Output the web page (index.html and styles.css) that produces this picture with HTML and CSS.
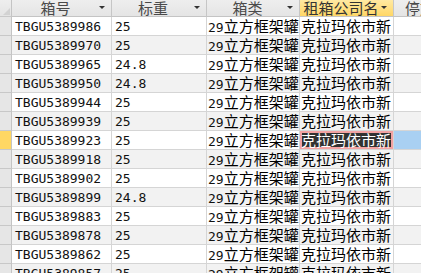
FILE: index.html
```html
<!DOCTYPE html>
<html>
<head>
<meta charset="utf-8">
<link rel="stylesheet" href="styles.css">
</head>
<body>
<div class="grid">
  <div class="row head">
    <div class="sel corner"><span class="tri"></span></div>
    <div class="hc c1"><span class="ht">箱号</span><span class="arr"></span></div>
    <div class="hc c2"><span class="ht">标重</span><span class="arr"></span></div>
    <div class="hc c3"><span class="ht">箱类</span><span class="arr"></span></div>
    <div class="hc c4 active"><span class="ht">租箱公司名</span><span class="arr"></span></div>
    <div class="hc c5 left"><span class="ht">停放位置</span></div>
  </div>
  <div class="row"><div class="sel"></div><div class="dc c1">TBGU5389986</div><div class="dc c2">25</div><div class="dc c3">29<span class="cjk">立方框架罐</span></div><div class="dc c4"><span class="cjk">克拉玛依市新</span></div><div class="dc c5"></div></div>
  <div class="row alt"><div class="sel"></div><div class="dc c1">TBGU5389970</div><div class="dc c2">25</div><div class="dc c3">29<span class="cjk">立方框架罐</span></div><div class="dc c4"><span class="cjk">克拉玛依市新</span></div><div class="dc c5"></div></div>
  <div class="row"><div class="sel"></div><div class="dc c1">TBGU5389965</div><div class="dc c2">24.8</div><div class="dc c3">29<span class="cjk">立方框架罐</span></div><div class="dc c4"><span class="cjk">克拉玛依市新</span></div><div class="dc c5"></div></div>
  <div class="row alt"><div class="sel"></div><div class="dc c1">TBGU5389950</div><div class="dc c2">24.8</div><div class="dc c3">29<span class="cjk">立方框架罐</span></div><div class="dc c4"><span class="cjk">克拉玛依市新</span></div><div class="dc c5"></div></div>
  <div class="row"><div class="sel"></div><div class="dc c1">TBGU5389944</div><div class="dc c2">25</div><div class="dc c3">29<span class="cjk">立方框架罐</span></div><div class="dc c4"><span class="cjk">克拉玛依市新</span></div><div class="dc c5"></div></div>
  <div class="row alt"><div class="sel"></div><div class="dc c1">TBGU5389939</div><div class="dc c2">25</div><div class="dc c3">29<span class="cjk">立方框架罐</span></div><div class="dc c4"><span class="cjk">克拉玛依市新</span></div><div class="dc c5"></div></div>
  <div class="row current"><div class="sel"></div><div class="dc c1">TBGU5389923</div><div class="dc c2">25</div><div class="dc c3">29<span class="cjk">立方框架罐</span></div><div class="dc c4 focus"><span class="cjk">克拉玛依市新</span></div><div class="dc c5"></div></div>
  <div class="row alt"><div class="sel"></div><div class="dc c1">TBGU5389918</div><div class="dc c2">25</div><div class="dc c3">29<span class="cjk">立方框架罐</span></div><div class="dc c4"><span class="cjk">克拉玛依市新</span></div><div class="dc c5"></div></div>
  <div class="row"><div class="sel"></div><div class="dc c1">TBGU5389902</div><div class="dc c2">25</div><div class="dc c3">29<span class="cjk">立方框架罐</span></div><div class="dc c4"><span class="cjk">克拉玛依市新</span></div><div class="dc c5"></div></div>
  <div class="row alt"><div class="sel"></div><div class="dc c1">TBGU5389899</div><div class="dc c2">24.8</div><div class="dc c3">29<span class="cjk">立方框架罐</span></div><div class="dc c4"><span class="cjk">克拉玛依市新</span></div><div class="dc c5"></div></div>
  <div class="row"><div class="sel"></div><div class="dc c1">TBGU5389883</div><div class="dc c2">25</div><div class="dc c3">29<span class="cjk">立方框架罐</span></div><div class="dc c4"><span class="cjk">克拉玛依市新</span></div><div class="dc c5"></div></div>
  <div class="row alt"><div class="sel"></div><div class="dc c1">TBGU5389878</div><div class="dc c2">25</div><div class="dc c3">29<span class="cjk">立方框架罐</span></div><div class="dc c4"><span class="cjk">克拉玛依市新</span></div><div class="dc c5"></div></div>
  <div class="row"><div class="sel"></div><div class="dc c1">TBGU5389862</div><div class="dc c2">25</div><div class="dc c3">29<span class="cjk">立方框架罐</span></div><div class="dc c4"><span class="cjk">克拉玛依市新</span></div><div class="dc c5"></div></div>
  <div class="row alt"><div class="sel"></div><div class="dc c1">TBGU5389857</div><div class="dc c2">25</div><div class="dc c3">29<span class="cjk">立方框架罐</span></div><div class="dc c4"><span class="cjk">克拉玛依市新</span></div><div class="dc c5"></div></div>
</div>
</body>
</html>
```
FILE: styles.css
```css
html, body {
  margin: 0;
  padding: 0;
  background: #ffffff;
  overflow: hidden;
}
.grid {
  width: 421px;
  height: 273px;
  overflow: hidden;
}
.row {
  display: flex;
  height: 19px;
  background: #ffffff;
}
.row.alt {
  background: #f2f2f2;
}
.row > div {
  box-sizing: border-box;
  flex: none;
  border-right: 1px solid #d5d5d5;
  border-bottom: 1px solid #d5d5d5;
  overflow: hidden;
  white-space: nowrap;
}
.sel {
  width: 12px;
  background: #e6e6e6;
  border-right-color: #c4c4c4 !important;
  border-bottom-color: #c8c8c8 !important;
}
.current .sel {
  background: #ffd763;
}
.c1 { width: 100px; }
.c2 { width: 95px; }
.c3 { width: 93px; }
.c4 { width: 94px; }
.c5 { width: 60px; }

.head {
  height: 17px;
  background: linear-gradient(#eeeeee, #e4e4e4);
}
.head > div {
  border-right-color: #c6c6c6;
  border-bottom-color: #c4c4c4;
}
.corner {
  position: relative;
  background: linear-gradient(#eeeeee, #e4e4e4);
}
.tri {
  position: absolute;
  right: 1px;
  bottom: 1px;
  width: 0;
  height: 0;
  border-left: 7px solid transparent;
  border-bottom: 7px solid #d2d2d2;
}
.hc {
  display: flex;
  align-items: center;
  padding-right: 6px;
  font-family: "Noto Sans CJK SC", sans-serif;
  font-size: 15px;
  line-height: 16px;
  color: #4a4a4a;
}
.hc .ht {
  flex: 1;
  text-align: center;
}
.hc.left .ht {
  text-align: left;
  padding-left: 11px;
}
.hc.active {
  background: linear-gradient(#ffe9a2, #ffd766);
  color: #333333;
}
.arr {
  width: 0;
  height: 0;
  border-left: 3px solid transparent;
  border-right: 3px solid transparent;
  border-top: 3px solid #333333;
  margin-bottom: 1px;
}
.dc {
  padding-left: 3px;
  padding-top: 1px;
  font-family: "DejaVu Sans Mono", monospace;
  font-size: 13px;
  line-height: 18px;
  color: #111111;
}
.cjk {
  font-family: "Noto Sans CJK SC", sans-serif;
  font-size: 15px;
  line-height: 16px;
  color: #000000;
}
.c3, .c4 {
  padding-left: 1px;
}
.dc.focus {
  background: #323232;
  color: #ffffff;
  box-shadow: inset 0 0 0 2px #f2a2a2;
}
.dc.focus .cjk {
  color: #ffffff;
}
.current .c5 {
  background: #a9d0f2;
}
```
